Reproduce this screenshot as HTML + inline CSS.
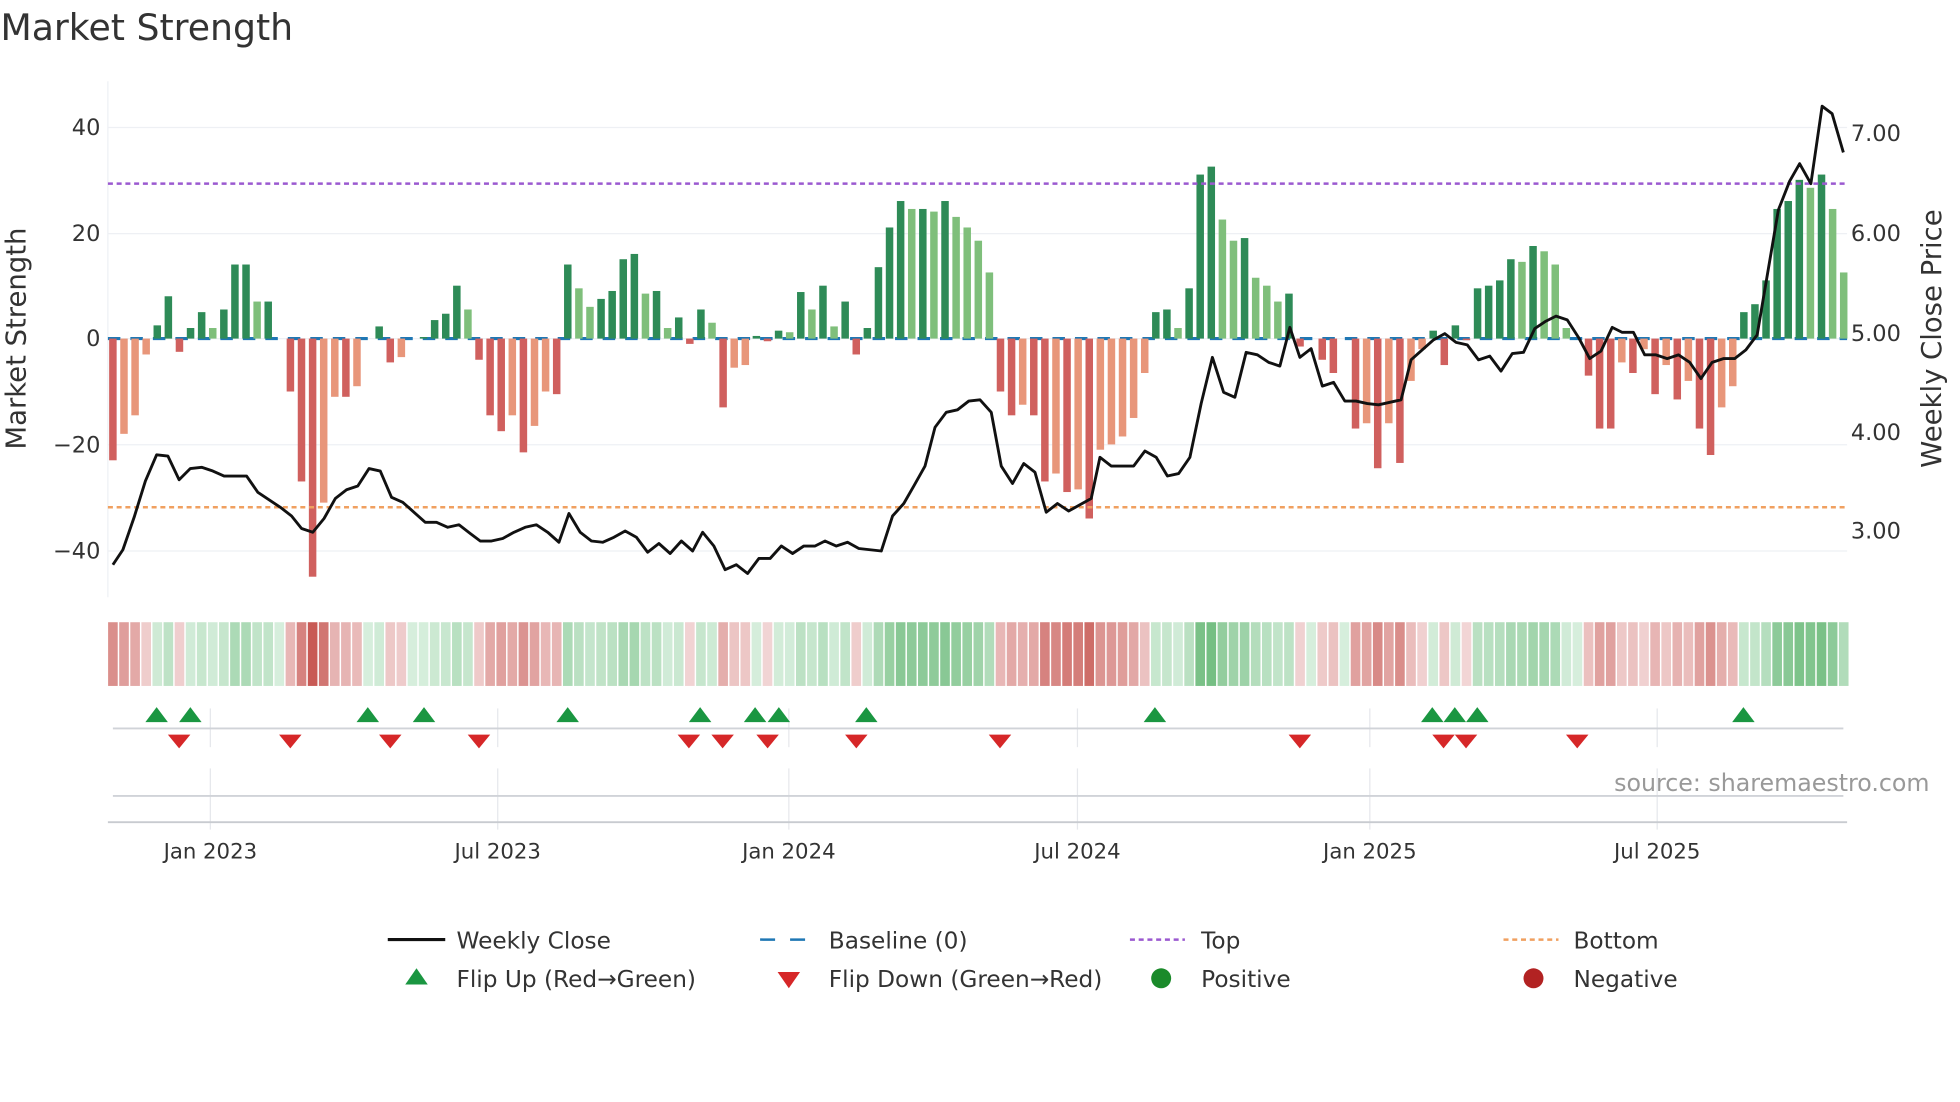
<!DOCTYPE html>
<html><head><meta charset="utf-8"><style>
html,body{margin:0;padding:0;background:#fff;}
svg{display:block;font-family:"DejaVu Sans","Liberation Sans",sans-serif;}
</style></head><body>
<svg id="s" width="1960" height="1102" viewBox="0 0 1568 882" xmlns="http://www.w3.org/2000/svg">
<text x="0" y="32" font-size="29" fill="#333">Market Strength</text>
<g id="grid"></g>
<g id="bars"></g>
<g id="strip"></g>
<g id="marks"></g>
<text transform="translate(20,271) rotate(-90)" text-anchor="middle" font-size="22" fill="#333">Market Strength</text>
<text transform="translate(1553,271) rotate(-90)" text-anchor="middle" font-size="22" fill="#333">Weekly Close Price</text>
<text x="1544" y="633" text-anchor="end" font-size="19" fill="#999">source: sharemaestro.com</text>
<g font-size="18.6" fill="#333">
<line x1="310" y1="752" x2="356" y2="752" stroke="#111" stroke-width="2.5"/><text x="365" y="759">Weekly Close</text>
<line x1="608" y1="752" x2="652" y2="752" stroke="#1f77b4" stroke-width="2" stroke-dasharray="12,12"/><text x="663" y="759">Baseline (0)</text>
<line x1="904" y1="752" x2="948" y2="752" stroke="#9b59d0" stroke-width="2" stroke-dasharray="4,3"/><text x="961" y="759">Top</text>
<line x1="1203" y1="752" x2="1247" y2="752" stroke="#f0a060" stroke-width="2" stroke-dasharray="4,3"/><text x="1259" y="759">Bottom</text>
<polygon points="324,788 342,788 333,775" fill="#1a9641"/><text x="365" y="790">Flip Up (Red→Green)</text>
<polygon points="622,778 640,778 631,791" fill="#d62728"/><text x="663" y="790">Flip Down (Green→Red)</text>
<circle cx="929" cy="783" r="8" fill="#1a8a2a"/><text x="961" y="790">Positive</text>
<circle cx="1227" cy="783" r="8" fill="#b22222"/><text x="1259" y="790">Negative</text>
</g>
</svg>
<script>
var NS="http://www.w3.org/2000/svg";
function el(p,t,a,txt){var e=document.createElementNS(NS,t);for(var k in a)e.setAttribute(k,a[k]);if(txt!=null)e.textContent=txt;document.getElementById(p).appendChild(e);return e;}
var V=[-23,-18,-14.5,-3,2.5,8,-2.5,2,5,2,5.5,14,14,7,7,0,-10,-27,-45,-31,-11,-11,-9,0,2.3,-4.5,-3.5,0,0.3,3.5,4.7,10,5.5,-4,-14.5,-17.5,-14.5,-21.5,-16.5,-10,-10.5,14,9.5,6,7.5,9,15,16,8.5,9,2,4,-1,5.5,3,-13,-5.5,-5,0.5,-0.5,1.5,1.2,8.8,5.5,10,2.3,7,-3,2,13.5,21,26,24.5,24.5,24,26,23,21,18.5,12.5,-10,-14.5,-12.5,-14.5,-27,-25.5,-29,-28.5,-34,-21,-20,-18.5,-15,-6.5,5,5.5,2,9.5,31,32.5,22.5,18.5,19,11.5,10,7,8.5,-1.5,0,-4,-6.5,0,-17,-16,-24.5,-16,-23.5,-8,-2,1.5,-5,2.5,-0.3,9.5,10,11,15,14.5,17.5,16.5,14,2,0,-7,-17,-17,-4.5,-6.5,-2,-10.5,-5,-11.5,-8,-17,-22,-13,-9,5,6.5,11,24.5,26,30,28.5,31,24.5,12.5];
function X(i){return 90+i*8.88;}
function Y(v){return 271-v*4.235;}
[102,187,271,356,441].forEach(function(y){el("grid","line",{x1:86,x2:1478,y1:y,y2:y,stroke:"#eef0f4","stroke-width":1});});
el("grid","line",{x1:86,x2:86,y1:65,y2:478,stroke:"#eef0f4"});
[["40",102],["20",187],["0",271],["−20",356],["−40",441]].forEach(function(a){el("grid","text",{x:80,y:a[1]+6,"text-anchor":"end","font-size":18,fill:"#333"},a[0]);});
[["7.00",106],["6.00",186],["5.00",266],["4.00",345],["3.00",424]].forEach(function(a){el("grid","text",{x:1481,y:a[1]+7,"font-size":18,fill:"#333"},a[0]);});
el("grid","line",{x1:86,x2:1478,y1:271,y2:271,stroke:"#1f77b4","stroke-width":2.5,"stroke-dasharray":"10,8"});
for(var i=0;i<V.length;i++){var v=V[i],p=i?V[i-1]:0,dark=Math.abs(v)>=Math.abs(p)||(v*p<=0);
 var c=v>=0?(dark?"#2e8b57":"#7fbf7b"):(dark?"#d0605e":"#e8967a");
 if(v==0)continue;var y1=Y(Math.max(v,0)),y2=Y(Math.min(v,0));
 el("bars","rect",{x:X(i)-3,y:y1,width:6,height:Math.max(y2-y1,1),fill:c});}
el("bars","line",{x1:86,x2:1478,y1:147,y2:147,stroke:"#9b59d0","stroke-width":2,"stroke-dasharray":"4,3"});
el("bars","line",{x1:86,x2:1478,y1:406,y2:406,stroke:"#f0a060","stroke-width":2,"stroke-dasharray":"4,3"});
var P=[[90,452],[98,440],[107,414],[116,385],[125,364],[134,365],[143,384],[152,375],[161,374],[170,377],[179,381],[188,381],[197,381],[206,394],[215,400],[224,406],[233,413],[241,423],[250,426],[259,415],[268,399],[277,392],[286,389],[295,375],[304,377],[313,398],[322,402],[331,410],[340,418],[349,418],[358,422],[367,420],[376,427],[384,433],[393,433],[402,431],[411,426],[420,422],[429,420],[438,426],[447,434],[455,411],[464,426],[473,433],[482,434],[491,430],[500,425],[509,430],[518,442],[527,435],[536,443],[545,433],[554,441],[562,426],[571,437],[580,456],[589,452],[598,459],[607,447],[616,447],[625,437],[634,443],[643,437],[652,437],[660,433],[669,437],[678,434],[687,439],[696,440],[705,441],[714,413],[723,403],[731,389],[740,373],[748,342],[757,330],[766,328],[775,321],[784,320],[793,330],[801,373],[810,387],[819,371],[828,378],[837,410],[846,403],[855,409],[864,404],[873,399],[880,366],[889,373],[898,373],[907,373],[916,361],[925,366],[934,381],[943,379],[952,366],[961,323],[970,286],[979,314],[988,318],[997,282],[1006,284],[1015,290],[1024,293],[1032,262],[1040,286],[1049,279],[1058,309],[1067,306],[1076,321],[1085,321],[1094,323],[1103,324],[1112,322],[1121,320],[1129,288],[1138,280],[1147,272],[1156,267],[1165,274],[1174,276],[1183,288],[1192,285],[1201,297],[1210,283],[1219,282],[1228,263],[1237,257],[1245,253],[1254,256],[1263,270],[1272,287],[1281,281],[1290,262],[1298,266],[1307,266],[1316,284],[1325,284],[1334,287],[1343,284],[1352,290],[1361,303],[1370,290],[1379,287],[1388,287],[1397,280],[1406,268],[1415,215],[1423,168],[1432,145],[1440,131],[1449,147],[1458,85],[1466,91],[1475,122]];
el("bars","polyline",{points:P.map(function(a){return a.join(",")}).join(" "),fill:"none",stroke:"#111","stroke-width":2.3,"stroke-linejoin":"round"});
function mix(a,b,t){return "rgb("+[0,1,2].map(function(k){return Math.round(a[k]+(b[k]-a[k])*t)}).join(",")+")";}
for(var i=0;i<V.length;i++){var v=V[i],t=Math.min(Math.abs(v)/40,1);
 var c=v>=0?mix([214,238,220],[95,180,110],t):mix([242,214,214],[200,90,85],t);
 el("strip","rect",{x:X(i)-4.44+0.6,y:498,width:7.7,height:51,fill:c});}
[168,398,631,862,1096,1326].forEach(function(x){el("marks","line",{x1:x,x2:x,y1:567,y2:598,stroke:"#e6e8ec"});el("marks","line",{x1:x,x2:x,y1:615,y2:664,stroke:"#e6e8ec"});});
el("marks","line",{x1:90,x2:1475,y1:583,y2:583,stroke:"#d0d3d8","stroke-width":1.5});
el("marks","line",{x1:90,x2:1475,y1:637,y2:637,stroke:"#d0d3d8","stroke-width":1.5});
el("marks","line",{x1:86,x2:1478,y1:658,y2:658,stroke:"#c8cbd0","stroke-width":1.5});
[["Jan 2023",168],["Jul 2023",398],["Jan 2024",631],["Jul 2024",862],["Jan 2025",1096],["Jul 2025",1326]].forEach(function(a){el("marks","text",{x:a[1],y:687,"text-anchor":"middle","font-size":17,fill:"#333"},a[0]);});
[125,152,294,339,454,560,604,623,693,924,1146,1164,1182,1395].forEach(function(x){el("marks","polygon",{points:(x-9)+",578 "+(x+9)+",578 "+x+",566",fill:"#1a9641"});});
[143,232,312,383,551,578,614,685,800,1040,1155,1173,1262].forEach(function(x){el("marks","polygon",{points:(x-9)+",588 "+(x+9)+",588 "+x+",599",fill:"#d62728"});});
</script>
</body></html>
